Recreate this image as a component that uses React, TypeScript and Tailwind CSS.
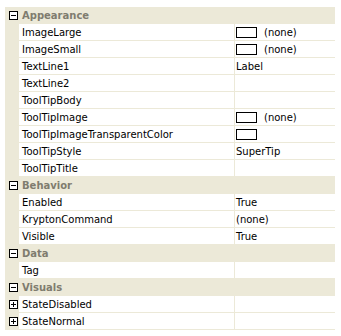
type Row =
  | { kind: "cat"; label: string }
  | { kind: "prop"; label: string; value?: string; swatch?: boolean; expand?: boolean }

const rows: Row[] = [
  { kind: "cat", label: "Appearance" },
  { kind: "prop", label: "ImageLarge", value: "(none)", swatch: true },
  { kind: "prop", label: "ImageSmall", value: "(none)", swatch: true },
  { kind: "prop", label: "TextLine1", value: "Label" },
  { kind: "prop", label: "TextLine2" },
  { kind: "prop", label: "ToolTipBody" },
  { kind: "prop", label: "ToolTipImage", value: "(none)", swatch: true },
  { kind: "prop", label: "ToolTipImageTransparentColor", swatch: true },
  { kind: "prop", label: "ToolTipStyle", value: "SuperTip" },
  { kind: "prop", label: "ToolTipTitle" },
  { kind: "cat", label: "Behavior" },
  { kind: "prop", label: "Enabled", value: "True" },
  { kind: "prop", label: "KryptonCommand", value: "(none)" },
  { kind: "prop", label: "Visible", value: "True" },
  { kind: "cat", label: "Data" },
  { kind: "prop", label: "Tag" },
  { kind: "cat", label: "Visuals" },
  { kind: "prop", label: "StateDisabled", expand: true },
  { kind: "prop", label: "StateNormal", expand: true },
]

function Glyph({ plus }: { plus?: boolean }) {
  return (
    <svg width="9" height="9" viewBox="0 0 9 9" className="block">
      <rect x="0.5" y="0.5" width="8" height="8" fill="#ffffff" stroke="#000000" />
      <rect x="2" y="4" width="5" height="1" fill="#000000" />
      {plus && <rect x="4" y="2" width="1" height="5" fill="#000000" />}
    </svg>
  )
}

export default function App() {
  return (
    <div
      className="w-[341px] h-[336px] bg-white pt-[7px] pl-[5px] text-[10px] text-black"
      style={{ fontFamily: "Tahoma, 'DejaVu Sans', sans-serif" }}
    >
      <div className="w-[330px]">
        {rows.map((r, i) =>
          r.kind === "cat" ? (
            <div key={i} className="flex items-center h-[17px] bg-[#ece9d8]">
              <div className="w-[14px] flex justify-end">
                <div className="mr-[1px]">
                  <Glyph />
                </div>
              </div>
              <span className="pl-[3px] font-bold text-[#7f7c6f]">{r.label}</span>
            </div>
          ) : (
            <div key={i} className="flex h-[17px]">
              <div className="w-[14px] bg-[#ece9d8] flex items-center justify-end">
                {r.expand && (
                  <div className="mr-[1px]">
                    <Glyph plus />
                  </div>
                )}
              </div>
              <div className="w-[215px] bg-white border-b border-[#ece9d8] pl-[3px] flex items-center whitespace-nowrap overflow-hidden">
                {r.label}
              </div>
              <div className="w-[1px] bg-[#ece9d8]" />
              <div className="flex-1 bg-white border-b border-[#ece9d8] pl-[1px] flex items-center gap-[7px] whitespace-nowrap">
                {r.swatch && <div className="w-[21px] h-[11px] border border-black bg-white" />}
                {r.value && <span>{r.value}</span>}
              </div>
            </div>
          )
        )}
      </div>
    </div>
  )
}
